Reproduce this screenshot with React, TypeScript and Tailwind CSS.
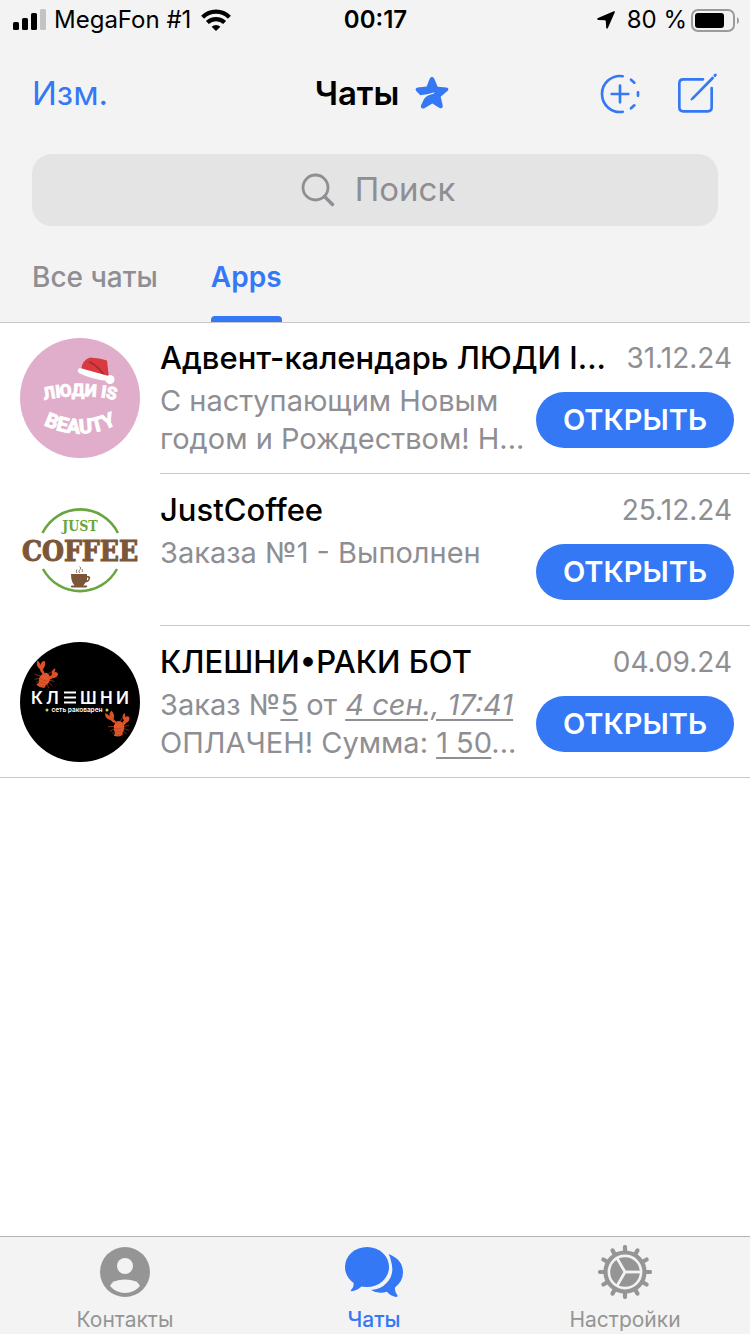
import type { ReactNode } from 'react';

interface Chat {
  id: string;
  name: string;
  date: string;
  avatar: ReactNode;
  message: ReactNode;
}

function SignalIcon() {
  return (
    <svg className="w-[34px] h-[22px]" viewBox="0 0 34 22" aria-hidden="true">
      <rect x="1" y="13" width="6" height="8" rx="1.5" />
      <rect x="10" y="9" width="6" height="12" rx="1.5" />
      <rect x="19" y="4" width="6" height="17" rx="1.5" />
      <rect x="28" y="0" width="6" height="21" rx="1.5" fill="#c3c3c3" />
    </svg>
  );
}

function WifiIcon() {
  return (
    <svg className="w-[30px] h-[22px]" viewBox="0 0 30 22" fill="none" stroke="#000" strokeWidth="4.2" aria-hidden="true">
      <path d="M1.6 8.2a19 19 0 0 1 26.8 0" />
      <path d="M6.4 13.6a12.2 12.2 0 0 1 17.2 0" />
      <path d="M15 22l-4.4-4.2a6.3 6.3 0 0 1 8.8 0z" fill="#000" stroke="none" />
    </svg>
  );
}

function LocationIcon() {
  return (
    <svg className="w-[18px] h-[18px]" viewBox="0 0 18 18" aria-hidden="true">
      <path d="M16.8.3Q18.3-.2 17.8 1.3L11 16.8q-1 1.8-1.8 0L8.8 10.2Q8.7 9.3 7.8 9.2L1.2 8.9Q-.8 8 1 6.9z" />
    </svg>
  );
}

function BatteryIcon() {
  return (
    <svg className="w-12 h-[23px]" viewBox="0 0 48 23" aria-hidden="true">
      <rect x="1" y="1" width="42" height="21" rx="6" fill="none" stroke="#9b9b9b" strokeWidth="2" />
      <rect x="4" y="4" width="29" height="15" rx="3" />
      <path d="M46 8q2 1 2 3.5t-2 3.5z" fill="#9b9b9b" />
    </svg>
  );
}

function StarIcon() {
  return (
    <svg className="w-[34px] h-[33px]" viewBox="345 230 102 98" fill="#3478f6" aria-hidden="true">
      <path d="M396 232Q391 232 388 240L380 261 353 264Q342 267 350 276L361 287Q380 286 404 278L401 283Q377 288 371 301L363 318Q361 330 373 326L397 312 420 326Q430 329 428 317L422 292 443 274Q449 266 439 264L413 262 404 240Q401 232 396 232Z" />
    </svg>
  );
}

function NewStoryIcon() {
  return (
    <svg className="size-10" viewBox="90 222 120 120" fill="none" stroke="#3478f6" strokeWidth="8" strokeLinecap="round" aria-hidden="true">
      <path d="M158 228.6A54 54 0 0 0 96 282 54 54 0 0 0 158 335.4" />
      <path d="M183 239l10 9M204 277v10M193 316l-10 9" />
      <path d="M150 257v50M125 282h50" />
    </svg>
  );
}

function ComposeIcon() {
  return (
    <svg className="size-[42px]" viewBox="320 212 126 126" fill="none" stroke="#3478f6" strokeWidth="8" strokeLinecap="round" aria-hidden="true">
      <path d="M401 234H342Q330 234 330 246V318Q330 330 342 330H415Q427 330 427 318V260" />
      <path d="M370 291L430 230" />
      <path d="M366 295L376 284" strokeWidth="5" />
      <path d="M437 222l1-1" strokeWidth="9" />
    </svg>
  );
}

function SearchIcon() {
  return (
    <svg className="size-[34px]" viewBox="0 0 34 34" fill="none" stroke="#8e8e93" aria-hidden="true">
      <circle cx="14.5" cy="14.5" r="12.5" strokeWidth="2.8" />
      <path d="M23.5 23.5l8 8" strokeWidth="3.4" strokeLinecap="round" />
    </svg>
  );
}

function BeautyAvatar() {
  return (
    <svg className="size-[120px] rounded-full" viewBox="0 0 120 120" role="img" aria-label="ЛЮДИ IS BEAUTY">
      <rect width="120" height="120" fill="#e0aecb" />
      <path id="beauty-top" d="M20 63Q60 53 100 63" fill="none" />
      <path id="beauty-bottom" d="M15 82Q60 109 105 82" fill="none" />
      <g fill="#fff" stroke="#fff" strokeWidth="1" textAnchor="middle" className="font-['Roboto',sans-serif] font-bold">
        <text fontSize="17">
          <textPath href="#beauty-top" startOffset="50%">
            ЛЮДИ IS
          </textPath>
        </text>
        <text fontSize="20">
          <textPath href="#beauty-bottom" startOffset="50%">
            BEAUTY
          </textPath>
        </text>
      </g>
      <path d="M61 32Q62 22 70 19.5 80 20 87 22.5L89 40Q75 37 61 32Z" fill="#d93a40" />
      <path d="M69 24q7 2 15 13" fill="none" stroke="#a9262d" strokeWidth="1.5" />
      <path d="M60 30Q74 34 87 37.5q3 3 0 5.5Q71 41 59 35q-3-3 1-5z" fill="#fff" />
      <circle cx="90" cy="41.5" r="4.5" fill="#fff" />
    </svg>
  );
}

function CoffeeAvatar() {
  return (
    <svg className="size-[120px] rounded-full" viewBox="0 0 120 120" role="img" aria-label="JUST COFFEE">
      <rect width="120" height="120" fill="#fff" />
      <g fill="none" stroke="#6aa640" strokeWidth="2.6">
        <path d="M22.5 43A42 42 0 0 1 98 43" />
        <path d="M23 79A42 42 0 0 0 97 79" />
      </g>
      <text x="60" y="41" fontSize="14" textAnchor="middle" fill="#6aa640" className="font-['DejaVu_Serif_Condensed','DejaVu_Serif',serif] font-bold">
        JUST
      </text>
      <text x="60" y="71" fontSize="28" textAnchor="middle" fill="#7b5638" stroke="#7b5638" strokeWidth="1" className="font-['DejaVu_Serif_Condensed','DejaVu_Serif',serif] font-bold">
        COFFEE
      </text>
      <path d="M51 84H67V86Q71 85.5 70 89 69 92 65.5 92.5 64 95 63 95.5H67Q68 97 66 97.5H52Q50 97 51.5 95.5H54.5Q51 92 51 84ZM67 87.5V90.5Q68.5 90 68.5 88.5 68.5 87.5 67 87.5Z" fill="#7b5638" fillRule="evenodd" />
      <path d="M57 83q-1.5-2 0-3.5M59.5 83q-1.5-2 .5-3.5t-.5-3M62 82q1-1.5 0-3" fill="none" stroke="#7b5638" strokeWidth=".8" />
    </svg>
  );
}

function Lobster() {
  return (
    <g>
      <path d="M-2 4L-9 3M-2 6L-8 8M-2 8L-6 11M6 6L12 6M6 8L11 11M5 10L8 14M1 2L-3-5M3 2L7-3" stroke="#8f3418" strokeWidth=".8" fill="none" />
      <path d="M0 0Q4-2 7 3 8 8 4 12L4 14Q0 16-5 13L-3 10Q-5 4 0 0Z" fill="#e0582c" />
      <path d="M-3 6q3 2 8 1M-3 9q3 2 7 1M-3 12q3 2 6 1" stroke="#b8431f" strokeWidth=".7" fill="none" />
      <path d="M0 2Q-4 0-5-3-10-5-9-11-6-9-5-7-5-11-2-12 1-8-2-3L2 2Z" fill="#dc5028" />
      <path d="M4 3Q7 2 8 0 6-4 10-7 11-5 10-3 13-4 14-2 14 2 10 3L6 6Z" fill="#dc5028" />
    </g>
  );
}

function LobsterAvatar() {
  return (
    <svg className="size-[120px] rounded-full" viewBox="0 0 120 120" role="img" aria-label="КЛЕШНИ сеть раковарен">
      <rect width="120" height="120" fill="#000" />
      <g transform="translate(24 31) rotate(12)">
        <Lobster />
      </g>
      <g transform="translate(96 80) rotate(-12)">
        <Lobster />
      </g>
      <g fill="#fff" fontSize="17" className="font-['Inter',sans-serif] font-semibold">
        <text x="11" y="62">К</text>
        <text x="26" y="62">Л</text>
        <text x="60" y="62">Ш</text>
        <text x="80" y="62">Н</text>
        <text x="96" y="62">И</text>
      </g>
      <path d="M44 50.5h12M44 55.5h12M44 60.5h12" stroke="#fff" strokeWidth="2" />
      <text x="57" y="70" fontSize="6.5" textAnchor="middle" fill="#fff" className="font-['Inter',sans-serif] font-semibold">
        сеть раковарен
      </text>
      <circle cx="27" cy="68" r="1.5" fill="#c6d84a" />
      <circle cx="87" cy="68" r="1.5" fill="#c6d84a" />
    </svg>
  );
}

function ContactsIcon() {
  return (
    <svg className="h-[52px] w-[50px]" viewBox="0 0 50 52" aria-hidden="true">
      <circle cx="25" cy="26" r="25" fill="#959595" />
      <circle cx="25" cy="20" r="8" fill="#f3f3f3" />
      <path d="M10 40Q12 33.5 25 33.5T40 40Q34 47 25 47T10 40Z" fill="#f3f3f3" />
    </svg>
  );
}

function ChatsIcon() {
  return (
    <svg className="h-[52px] w-[58px]" viewBox="0 -1 58 52" fill="#3478f6" aria-hidden="true">
      <ellipse cx="22" cy="20" rx="22" ry="20" />
      <path d="M8 33Q10 39 6 43 5 44.5 7 44.3 13 43.5 18 38Z" />
      <path d="M43.5 7Q58 12.5 58 25.5 58 34 50 40.5 49.5 45 52.5 48.5 53 50 51 50 45.5 49 42 44.8 33 47.5 26 43 36 42.5 42 35.5 50 27 46 14 45.5 10 43.5 7Z" />
    </svg>
  );
}

const teeth = [0, 30, 60, 90, 120, 150, 180, 210, 240, 270, 300, 330];
const spokes = [0, 120, 240];

function SettingsIcon() {
  return (
    <svg className="h-[54px] w-[54px]" viewBox="-27 -27 54 54" aria-hidden="true">
      <g stroke="#959595" strokeWidth="4.2" strokeLinecap="round">
        {teeth.map((angle) => (
          <path key={angle} d="M20 0H25" transform={`rotate(${angle})`} />
        ))}
      </g>
      <circle r="19.5" fill="none" stroke="#959595" strokeWidth="4.2" />
      <circle r="14.8" fill="#959595" />
      <g stroke="#f3f3f3" strokeWidth="2.8">
        {spokes.map((angle) => (
          <path key={angle} d="M0 0H16" transform={`rotate(${angle})`} />
        ))}
      </g>
    </svg>
  );
}

const chats: Chat[] = [
  {
    id: 'advent',
    name: 'Адвент-календарь ЛЮДИ I...',
    date: '31.12.24',
    avatar: <BeautyAvatar />,
    message: (
      <>
        С наступающим Новым
        <br />
        годом и Рождеством! Н...
      </>
    ),
  },
  {
    id: 'coffee',
    name: 'JustCoffee',
    date: '25.12.24',
    avatar: <CoffeeAvatar />,
    message: 'Заказа №1 - Выполнен',
  },
  {
    id: 'kleshni',
    name: 'КЛЕШНИ•РАКИ БОТ',
    date: '04.09.24',
    avatar: <LobsterAvatar />,
    message: (
      <>
        Заказ №<u>5</u> от{' '}
        <u>
          <i>4 сен., 17:41</i>
        </u>
        <br />
        ОПЛАЧЕН! Сумма: <u>1 50</u>...
      </>
    ),
  },
];

const tabs = [
  { label: 'Контакты', icon: <ContactsIcon />, active: false },
  { label: 'Чаты', icon: <ChatsIcon />, active: true },
  { label: 'Настройки', icon: <SettingsIcon />, active: false },
];

function StatusBar() {
  return (
    <div className="grid h-10 grid-cols-[1fr_auto_1fr] items-center pl-3 pr-[11px] text-[24px]">
      <div className="flex items-center gap-2">
        <SignalIcon />
        <span className="pr-0.5">MegaFon #1</span>
        <WifiIcon />
      </div>
      <span className="font-semibold">00:17</span>
      <div className="flex items-center justify-end gap-1">
        <LocationIcon />
        <span className="pl-2">80 %</span>
        <BatteryIcon />
      </div>
    </div>
  );
}

function ChatRow({ chat, last }: { chat: Chat; last: boolean }) {
  return (
    <li className={last ? 'flex h-[152px] gap-5 border-b border-[#c8c7cc] pl-5' : 'flex h-[152px] gap-5 pl-5'}>
      <div className="shrink-0 pt-4">{chat.avatar}</div>
      <div className={last ? 'min-w-0 flex-1 pr-4 pt-4' : 'min-w-0 flex-1 border-b border-[#c8c7cc] pr-4 pt-4'}>
        <div className="flex h-10 items-center justify-between whitespace-nowrap pr-0.5">
          <h2 className="text-[31px] font-medium">{chat.name}</h2>
          <time className="text-[28px] text-[#8e8e93]">{chat.date}</time>
        </div>
        <div className="flex items-start justify-between pt-1">
          <p className="whitespace-nowrap text-[29px] leading-[38px] text-[#8e8e93] underline-offset-4">{chat.message}</p>
          <button type="button" className="mt-2.5 h-14 w-[198px] shrink-0 rounded-full bg-[#3478f6] text-[29px] font-semibold text-white">
            ОТКРЫТЬ
          </button>
        </div>
      </div>
    </li>
  );
}

export default function App() {
  return (
    <div className="flex min-h-screen flex-col bg-white font-['Inter',sans-serif] text-black">
      <header className="border-b border-[#c8c7cc] bg-[#f3f3f3]">
        <StatusBar />
        <div className="grid h-[108px] grid-cols-[1fr_auto_1fr] items-center px-8">
          <button type="button" className="justify-self-start text-[33px] text-[#3478f6]">
            Изм.
          </button>
          <div className="flex items-center gap-4 pl-3.5">
            <h1 className="text-[33px] font-semibold">Чаты</h1>
            <span className="pb-1">
              <StarIcon />
            </span>
          </div>
          <div className="flex items-center justify-end gap-9">
            <button type="button" aria-label="Новая история">
              <NewStoryIcon />
            </button>
            <button type="button" aria-label="Новое сообщение" className="pb-0.5">
              <ComposeIcon />
            </button>
          </div>
        </div>
        <label className="mx-8 mt-1.5 flex h-[72px] items-center justify-center gap-5 rounded-[20px] bg-[#e4e4e4] pl-1.5">
          <SearchIcon />
          <input
            type="search"
            aria-label="Поиск"
            placeholder="Поиск"
            className="field-sizing-content bg-transparent text-[33px] outline-none placeholder:text-[#8e8e93]"
          />
        </label>
        <nav className="flex h-24 gap-[53px] pl-8 text-[28px]">
          <button type="button" className="flex flex-col items-center font-medium text-[#8e8e93]">
            <span className="flex flex-1 items-center pt-3">Все чаты</span>
            <span className="h-1.5 w-full" />
          </button>
          <button type="button" className="flex flex-col items-center font-semibold text-[#3478f6]">
            <span className="flex flex-1 items-center pt-3">Apps</span>
            <span className="h-1.5 w-full rounded-t bg-[#3478f6]" />
          </button>
        </nav>
      </header>

      <main className="-mt-px flex-1">
        <ul>
          {chats.map((chat, index) => (
            <ChatRow key={chat.id} chat={chat} last={index === chats.length - 1} />
          ))}
        </ul>
      </main>

      <nav className="grid h-[98px] grid-cols-3 border-t border-[#b2b2b2] bg-[#f3f3f3]">
        {tabs.map((tab) => (
          <button
            key={tab.label}
            type="button"
            className={
              tab.active
                ? 'flex flex-col items-center justify-between pb-0.5 pr-0.5 pt-2 text-[21px] font-medium text-[#3478f6]'
                : 'flex flex-col items-center justify-between pb-0.5 pt-2 text-[21px] text-[#959595]'
            }
          >
            <span className="flex h-[54px] items-center">{tab.icon}</span>
            <span className="leading-6">{tab.label}</span>
          </button>
        ))}
      </nav>
    </div>
  );
}
